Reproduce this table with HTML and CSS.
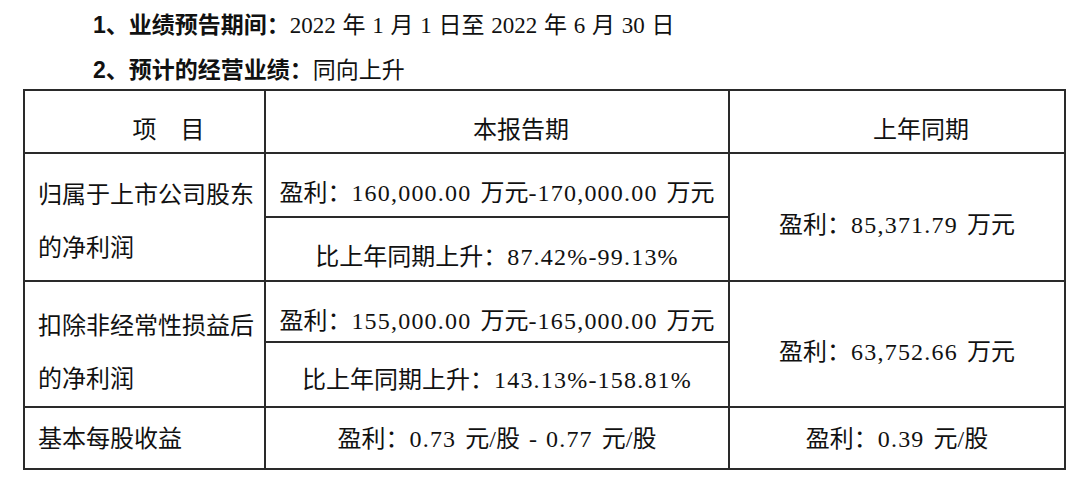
FILE: index.html
```html
<!DOCTYPE html>
<html lang="zh-CN">
<head>
<meta charset="utf-8">
<title>业绩预告</title>
<link rel="stylesheet" href="styles.css">
</head>
<body>
<div class="page">
  <p class="line line-1"><span class="label">1、业绩预告期间：</span>2022 年 1 月 1 日至 2022 年 6 月 30 日</p>
  <p class="line line-2"><span class="label">2、预计的经营业绩：</span>同向上升</p>
  <table class="forecast">
    <colgroup>
      <col class="c1">
      <col class="c2">
      <col class="c3">
    </colgroup>
    <tr class="head">
      <td>项&emsp;目</td>
      <td>本报告期</td>
      <td>上年同期</td>
    </tr>
    <tr class="r1a">
      <td rowspan="2" class="item item-1">归属于上市公司股东的净利润</td>
      <td class="val">盈利：<span class="n">160,000.00</span> 万元<span class="n">-170,000.00</span> 万元</td>
      <td rowspan="2" class="val prev-1">盈利：<span class="n">85,371.79</span> 万元</td>
    </tr>
    <tr class="r1b">
      <td class="val">比上年同期上升：<span class="n">87.42%-99.13%</span></td>
    </tr>
    <tr class="r2a">
      <td rowspan="2" class="item item-2">扣除非经常性损益后的净利润</td>
      <td class="val">盈利：<span class="n">155,000.00</span> 万元<span class="n">-165,000.00</span> 万元</td>
      <td rowspan="2" class="val prev-2">盈利：<span class="n">63,752.66</span> 万元</td>
    </tr>
    <tr class="r2b">
      <td class="val">比上年同期上升：<span class="n">143.13%-158.81%</span></td>
    </tr>
    <tr class="r3">
      <td class="item">基本每股收益</td>
      <td class="val">盈利：<span class="n">0.73</span> 元/股 - <span class="n">0.77</span> 元/股</td>
      <td class="val">盈利：<span class="n">0.39</span> 元/股</td>
    </tr>
  </table>
</div>
</body>
</html>
```

FILE: styles.css
```css
html, body {
  margin: 0;
  padding: 0;
  background: #ffffff;
}

body {
  font-family: "Liberation Serif", "Noto Sans CJK SC", serif;
  color: #111111;
}

.page {
  padding: 0 0 0 23px;
}

.line {
  margin: 0;
  padding-left: 70px;
  font-size: 23px;
  height: 48px;
  word-spacing: 1px;
}

.line-1 {
  line-height: 50px;
}

.line-2 {
  line-height: 44px;
}

.label {
  font-family: "Liberation Sans", "Noto Sans CJK SC", sans-serif;
  font-weight: 700;
  word-spacing: 0;
}

.n {
  letter-spacing: 0.05em;
}

.forecast {
  border-collapse: collapse;
  table-layout: fixed;
  width: 1041px;
  font-size: 24px;
  margin-top: -7px;
}

.c1 { width: 241px; }
.c2 { width: 464px; }
.c3 { width: 336px; }

.forecast td {
  border: 2px solid #2a2a2a;
  padding: 0;
  text-align: center;
  vertical-align: middle;
  white-space: nowrap;
  line-height: 30px;
  word-spacing: 3px;
}

.head td {
  height: 63px;
  padding: 16px 0 0 48px;
  box-sizing: border-box;
}

.r1a td, .r1b td {
  height: 64px;
  padding-top: 16px;
  box-sizing: border-box;
}

.r2a td {
  height: 61px;
  padding-top: 18px;
  box-sizing: border-box;
}

.r2b td {
  height: 64px;
  padding-top: 10px;
  box-sizing: border-box;
}

.r3 td {
  height: 62px;
  padding-top: 2px;
  box-sizing: border-box;
}

.forecast td.item {
  text-align: left;
  white-space: normal;
  padding-left: 13px;
  line-height: 53px;
  word-spacing: 0;
}

.forecast td.item-1 {
  padding-top: 9px;
}

.forecast td.item-2 {
  padding-top: 18px;
}

.forecast td.prev-1 {
  padding-top: 16px;
}

.forecast td.prev-2 {
  padding-top: 16px;
}
```
